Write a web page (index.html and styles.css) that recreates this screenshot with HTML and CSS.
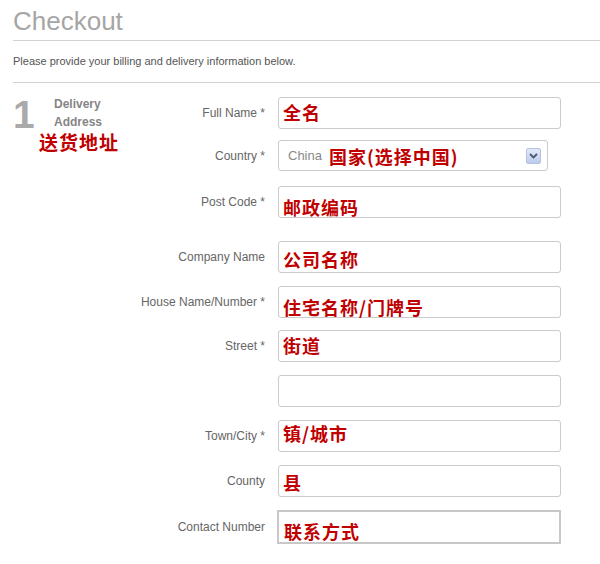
FILE: index.html
```html
<!DOCTYPE html>
<html lang="zh-CN">
<head>
    <meta charset="UTF-8">
    <meta name="viewport" content="width=device-width, initial-scale=1.0">
    <title>Checkout</title>
    <link rel="stylesheet" href="styles.css">
</head>
<body>

<div class="page">
    <h1 class="title">Checkout</h1>
    <p class="intro">Please provide your billing and delivery information below.</p>

    <!-- Step 1: delivery address -->
    <div class="section">
        <div class="step">
            <div class="step-head">
                <span class="step-num">1</span>
                <span class="step-name">Delivery<br>Address</span>
            </div>
            <div class="note step-note">送货地址</div>
        </div>

        <div class="fields">
            <div class="row row-name">
                <label>Full Name *</label>
                <div class="box"><span class="note">全名</span></div>
            </div>
            <div class="row row-country">
                <label>Country *</label>
                <div class="select">
                    <span class="select-value">China</span>
                    <span class="note">国家(选择中国)</span>
                    <span class="select-arrow">
                        <svg width="9" height="6" viewBox="0 0 9 6"><path d="M1 1 L4.5 4.5 L8 1" fill="none" stroke="#4a5675" stroke-width="1.8"/></svg>
                    </span>
                </div>
            </div>
            <div class="row row-post">
                <label>Post Code *</label>
                <div class="box is-low"><span class="note">邮政编码</span></div>
            </div>
            <div class="row">
                <label>Company Name</label>
                <div class="box is-mid"><span class="note">公司名称</span></div>
            </div>
            <div class="row row-house">
                <label>House Name/Number *</label>
                <div class="box is-low"><span class="note">住宅名称/门牌号</span></div>
            </div>
            <div class="row">
                <label>Street *</label>
                <div class="box"><span class="note">街道</span></div>
            </div>
            <div class="row">
                <label></label>
                <div class="box"></div>
            </div>
            <div class="row">
                <label>Town/City *</label>
                <div class="box is-up"><span class="note">镇/城市</span></div>
            </div>
            <div class="row">
                <label>County</label>
                <div class="box is-drop"><span class="note">县</span></div>
            </div>
            <div class="row">
                <label>Contact Number</label>
                <div class="box box-contact"><span class="note">联系方式</span></div>
            </div>
        </div>
    </div>
</div>

</body>
</html>
```

FILE: styles.css
```css
body {
    margin: 0;
    background-color: #fff;
    font-family: "Liberation Sans", Arial, sans-serif;
}

.page {
    padding-left: 13px;
}

.title {
    margin: 0;
    padding: 6px 0 4px;
    font-size: 26px;
    line-height: 30px;
    font-weight: normal;
    color: #a6a6a6;
    border-bottom: 1px solid #d2d2d2;
}

.intro {
    margin: 0;
    padding: 14px 0 14px;
    font-size: 11px;
    line-height: 13px;
    color: #555;
    border-bottom: 1px solid #d2d2d2;
}

.section {
    display: flex;
    padding-top: 14px;
}

/* left column: step number and title */
.step {
    width: 120px;
}

.step-head {
    display: flex;
    margin-top: -2px;
}

.step-num {
    width: 41px;
    font-size: 39px;
    line-height: 40px;
    font-weight: bold;
    color: #aaa;
}

.step-name {
    font-size: 12px;
    line-height: 18px;
    font-weight: bold;
    color: #858585;
}

.note {
    font-family: "Noto Sans CJK SC", sans-serif;
    font-size: 18px;
    line-height: 20px;
    font-weight: bold;
    letter-spacing: 1px;
    color: #c00000;
    white-space: nowrap;
}

.step-note {
    margin: -3px 0 0 26px;
    font-size: 19px;
}

/* form rows */
.row {
    display: flex;
    align-items: center;
    margin-bottom: 13px;
}

.row label {
    width: 132px;
    margin-right: 13px;
    text-align: right;
    font-size: 12px;
    color: #666;
}

.row-name {
    margin-bottom: 11px;
}

.row-country {
    margin-bottom: 15px;
}

.row-post {
    margin-bottom: 23px;
}

.row-house {
    margin-bottom: 12px;
}

.box {
    display: flex;
    align-items: flex-start;
    box-sizing: border-box;
    width: 283px;
    height: 32px;
    padding: 4px 0 0 4px;
    border: 1px solid #cbcbcb;
    border-radius: 3px;
}

.box.is-low {
    padding-top: 10px;
}

.box.is-mid {
    padding-top: 7px;
}

.box.is-up {
    padding-top: 2px;
}

.box.is-drop {
    padding-top: 6px;
}

.box-contact {
    width: 284px;
    height: 34px;
    margin-left: -1px;
    padding: 9px 0 0 5px;
    border: 2px solid #c8c8c8;
    border-radius: 0;
}

.select {
    display: flex;
    align-items: center;
    box-sizing: border-box;
    width: 270px;
    height: 31px;
    padding: 0 6px 0 9px;
    border: 1px solid #cbcbcb;
    border-radius: 3px;
}

.select-value {
    font-size: 13px;
    color: #888;
    margin-right: 7px;
}

.select-arrow {
    display: flex;
    align-items: center;
    justify-content: center;
    box-sizing: border-box;
    width: 15px;
    height: 16px;
    margin-left: auto;
    border: 1px solid #b3c3e0;
    border-radius: 2px;
    background: linear-gradient(#e3eaf8, #bccbeb);
}
```
